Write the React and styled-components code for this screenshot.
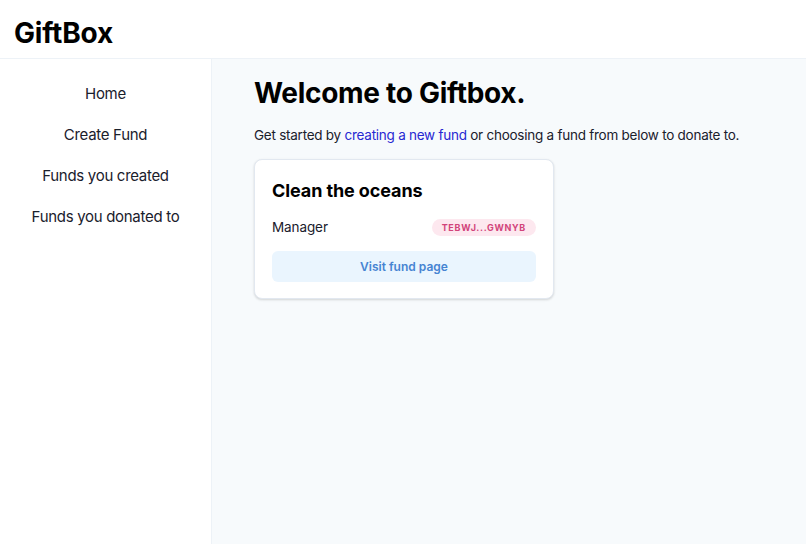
import React from 'react';
import styled, { createGlobalStyle } from 'styled-components';

const GlobalStyle = createGlobalStyle`
  html, body {
    margin: 0;
    padding: 0;
    height: 100%;
  }
  body {
    font-family: Inter, "Noto Sans", sans-serif;
    color: #1a202c;
    background: #ffffff;
  }
  #root {
    height: 100%;
  }
`;

const Page = styled.div`
  display: flex;
  flex-direction: column;
  height: 544px;
`;

const Header = styled.header`
  height: 59px;
  box-sizing: border-box;
  display: flex;
  align-items: center;
  padding: 7px 14px 0;
  border-bottom: 1px solid #edf2f7;
  flex-shrink: 0;
`;

const Logo = styled.h1`
  margin: 0;
  font-size: 28px;
  font-weight: 700;
  color: #000;
  letter-spacing: -0.2px;
`;

const Body = styled.div`
  flex: 1;
  display: flex;
  min-height: 0;
`;

const Sidebar = styled.nav`
  width: 211px;
  border-right: 1px solid #edf2f7;
  display: flex;
  flex-direction: column;
  align-items: center;
  gap: 17px;
  padding-top: 23px;
  flex-shrink: 0;
`;

const NavItem = styled.a`
  font-size: 15px;
  line-height: 24px;
  letter-spacing: -0.3px;
  color: #1a202c;
  text-decoration: none;
  cursor: pointer;
`;

const Main = styled.main`
  flex: 1;
  background: #f7fafc;
  padding: 16px 42px;
`;

const Title = styled.h2`
  margin: 0;
  font-size: 28px;
  line-height: 36px;
  font-weight: 700;
  letter-spacing: -0.3px;
  color: #000;
`;

const Intro = styled.p`
  margin: 12px 0 0;
  font-size: 13.5px;
  line-height: 24px;
  letter-spacing: -0.25px;
  white-space: nowrap;
  color: #1a202c;
`;

const InlineLink = styled.a`
  color: #2828d2;
  text-decoration: none;
  cursor: pointer;
`;

const Card = styled.div`
  margin-top: 12px;
  width: 264px;
  padding: 17px 17px 16px;
  background: #fff;
  border: 1px solid #e2e8f0;
  border-radius: 8px;
  box-shadow: 0 1px 3px rgba(0, 0, 0, 0.1), 0 1px 2px rgba(0, 0, 0, 0.06);
`;

const CardTitle = styled.h3`
  margin: 0;
  font-size: 18px;
  line-height: 28px;
  font-weight: 700;
  letter-spacing: -0.1px;
  color: #000;
`;

const Row = styled.div`
  margin-top: 10px;
  display: flex;
  align-items: center;
  justify-content: space-between;
`;

const Label = styled.span`
  font-size: 13.5px;
  line-height: 24px;
  letter-spacing: -0.1px;
  color: #1a202c;
`;

const Badge = styled.span`
  background: #fde8ef;
  color: #d2447b;
  font-size: 9px;
  font-weight: 700;
  letter-spacing: 0.7px;
  text-transform: uppercase;
  padding: 0 10px;
  line-height: 17px;
  border-radius: 9px;
`;

const Button = styled.button`
  margin-top: 12px;
  width: 100%;
  height: 31px;
  border: none;
  border-radius: 6px;
  background: #eaf5fe;
  color: #4684d2;
  font-family: inherit;
  font-size: 12px;
  font-weight: 600;
  cursor: pointer;
`;

const navLinks = ['Home', 'Create Fund', 'Funds you created', 'Funds you donated to'];

export default function App() {
  return (
    <>
      <GlobalStyle />
      <Page>
        <Header>
          <Logo>GiftBox</Logo>
        </Header>
        <Body>
          <Sidebar>
            {navLinks.map((l) => (
              <NavItem key={l}>{l}</NavItem>
            ))}
          </Sidebar>
          <Main>
            <Title>Welcome to Giftbox.</Title>
            <Intro>
              Get started by <InlineLink>creating a new fund</InlineLink> or choosing a fund from below to donate to.
            </Intro>
            <Card>
              <CardTitle>Clean the oceans</CardTitle>
              <Row>
                <Label>Manager</Label>
                <Badge>TEBWJ...GWNYB</Badge>
              </Row>
              <Button>Visit fund page</Button>
            </Card>
          </Main>
        </Body>
      </Page>
    </>
  );
}
